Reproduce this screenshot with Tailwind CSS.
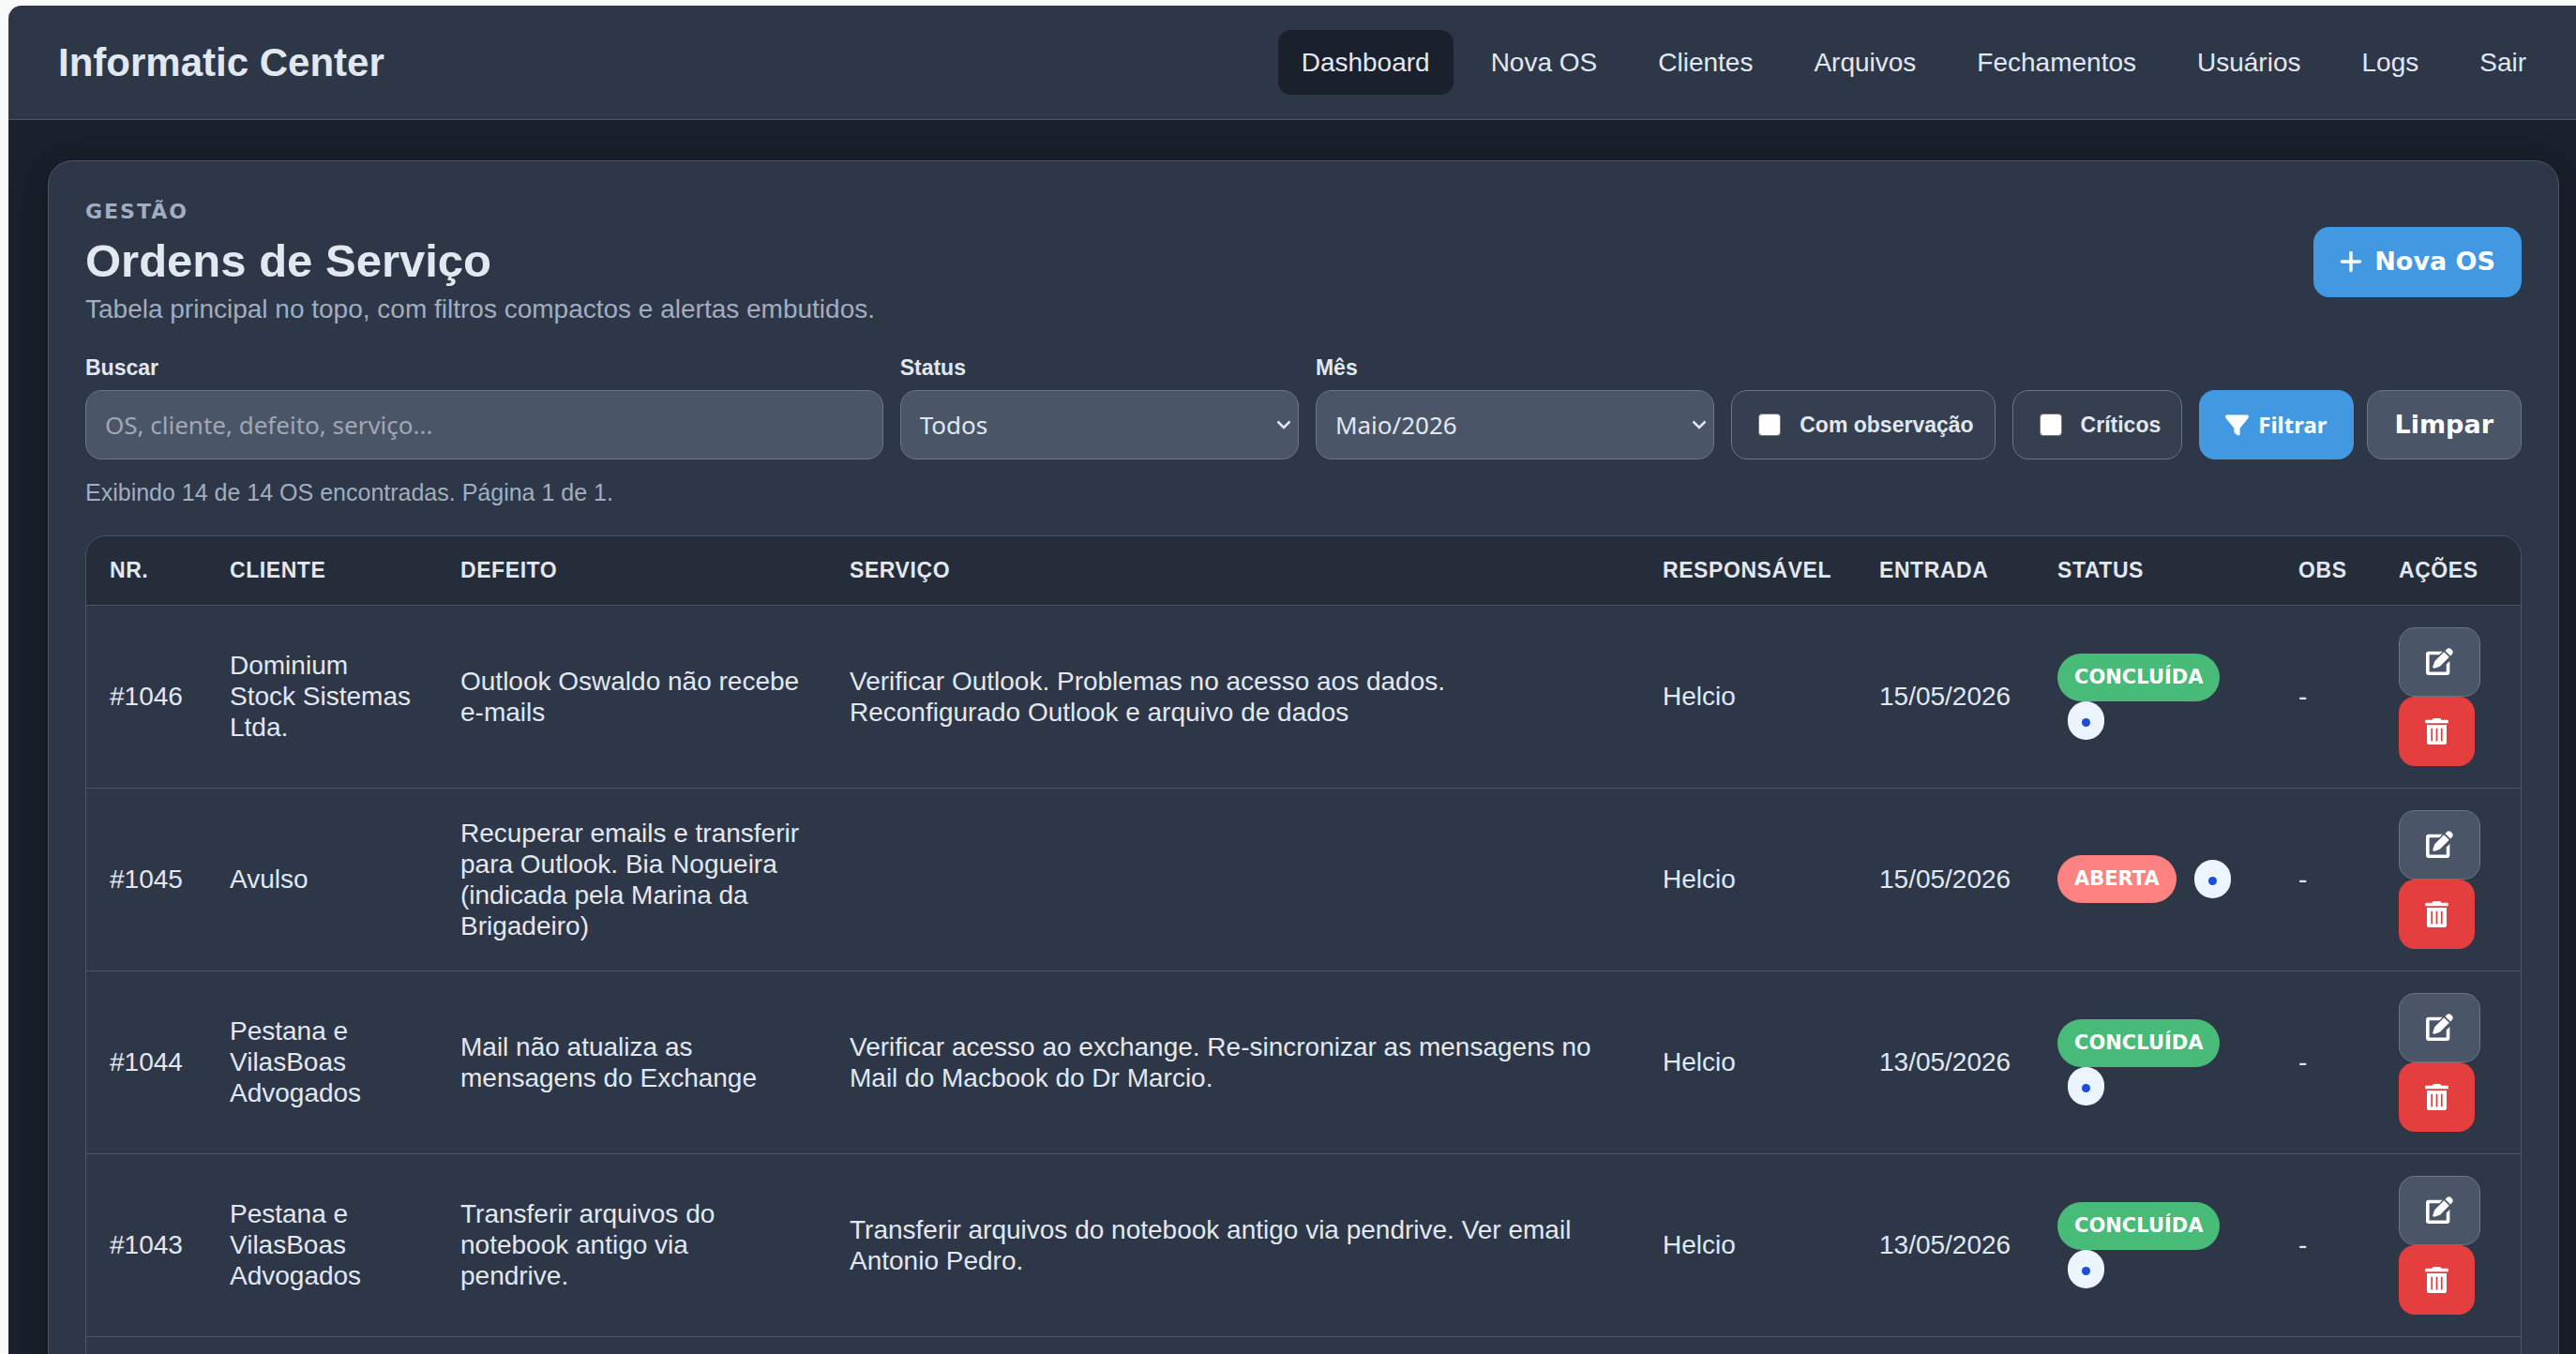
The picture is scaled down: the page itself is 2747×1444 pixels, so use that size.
<!DOCTYPE html>
<html lang="pt-BR">

<head>
    <meta charset="UTF-8">
    <meta name="viewport" content="width=device-width, initial-scale=1.0">
    <title>Informatic Center - Ordens de Serviço</title>
    <script src="https://cdn.jsdelivr.net/npm/@tailwindcss/browser@4"></script>
</head>

<body class="bg-[#f8f9fb] font-['Liberation_Sans',Arial,sans-serif] text-[28px] text-[#e2e8f0]">
    <!-- Icons -->
    <svg class="hidden" aria-hidden="true">
        <symbol id="icon-edit" viewBox="0 0 512 512">
            <path d="M471.6 21.7c-21.9-21.9-57.3-21.9-79.2 0L362.3 51.7l97.9 97.9 30.1-30.1c21.9-21.9 21.9-57.3 0-79.2L471.6 21.7zM172.4 241.7c-6.1 6.1-10.8 13.6-13.5 21.9l-29.6 88.8c-2.9 8.6-.6 18.1 5.8 24.6s15.9 8.7 24.6 5.8l88.8-29.6c8.2-2.7 15.7-7.4 21.9-13.5L437.7 172.3 339.7 74.3 172.4 241.7zM384 311V448H64V128H250L314 64H48C21.5 64 0 85.5 0 112V464c0 26.5 21.5 48 48 48H400c26.5 0 48-21.5 48-48V247z" />
        </symbol>
        <symbol id="icon-trash" viewBox="0 0 448 512">
            <path d="M32 464a48 48 0 0 0 48 48h288a48 48 0 0 0 48-48V128H32zm272-256a16 16 0 0 1 32 0v224a16 16 0 0 1-32 0zm-96 0a16 16 0 0 1 32 0v224a16 16 0 0 1-32 0zm-96 0a16 16 0 0 1 32 0v224a16 16 0 0 1-32 0zM432 32H312l-9.4-18.7A24 24 0 0 0 281.1 0H166.8a23.72 23.72 0 0 0-21.4 13.3L136 32H16A16 16 0 0 0 0 48v32a16 16 0 0 0 16 16h416a16 16 0 0 0 16-16V48a16 16 0 0 0-16-16z" />
        </symbol>
        <symbol id="icon-chevron" viewBox="0 0 16 10">
            <path d="M1.5 1.5 8 8l6.500-6.500" fill="none" stroke="currentColor" stroke-width="2.500" />
        </symbol>
    </svg>

    <div class="flex h-screen flex-col overflow-hidden pl-[9px] pt-[6px]">
        <!-- Navigation Bar -->
        <header class="flex items-center justify-between rounded-tl-[14px] border-b border-[#4a5568] bg-[#2d3748] py-[26px] pl-[53px] pr-[28px]">
            <a href="#" class="text-[42px] leading-[48px] font-bold">Informatic Center</a>
            <nav class="flex gap-[15px] leading-[33px]">
                <a href="#" class="rounded-[14px] bg-[#1a202c] px-[25px] py-[18px]">Dashboard</a>
                <a href="#" class="rounded-[14px] px-[25px] py-[18px]">Nova OS</a>
                <a href="#" class="rounded-[14px] px-[25px] py-[18px]">Clientes</a>
                <a href="#" class="rounded-[14px] px-[25px] py-[18px]">Arquivos</a>
                <a href="#" class="rounded-[14px] px-[25px] py-[18px]">Fechamentos</a>
                <a href="#" class="rounded-[14px] px-[25px] py-[18px]">Usuários</a>
                <a href="#" class="rounded-[14px] px-[25px] py-[18px]">Logs</a>
                <a href="#" class="rounded-[14px] px-[25px] py-[18px]">Sair</a>
            </nav>
        </header>

        <main class="flex-1 overflow-hidden bg-[#1a202c] pl-[42px] pr-[18px] pt-[43px]">
            <section class="rounded-[26px] border border-[#4a5568] bg-[#2d3748] px-[39px] py-[40px] shadow-[0_7px_42px_rgba(0,0,0,0.3)]">
                <!-- Title -->
                <div class="flex items-center justify-between">
                    <div>
                        <p class="mb-[10px] font-['DejaVu_Sans',Verdana,sans-serif] text-[22px] leading-[28px] font-black tracking-[2px] text-[#a0aec0]">GESTÃO</p>
                        <h1 class="text-[49px] leading-[56px] font-bold">Ordens de Serviço</h1>
                        <p class="mt-[8px] leading-[32px] text-[#a0aec0]">Tabela principal no topo, com filtros compactos e alertas embutidos.</p>
                    </div>
                    <a href="#" class="flex h-[75px] items-center gap-[13px] rounded-[17px] bg-[#4299e1] px-[28px] font-['DejaVu_Sans',Verdana,sans-serif] text-[27px] font-black text-white">
                        <svg class="h-[28px] w-[24px]" viewBox="0 0 448 512" fill="currentColor" aria-hidden="true">
                            <path d="M256 80c0-17.700-14.300-32-32-32s-32 14.300-32 32V224H48c-17.700 0-32 14.300-32 32s14.300 32 32 32H192V432c0 17.700 14.300 32 32 32s32-14.300 32-32V288H400c17.700 0 32-14.300 32-32s-14.300-32-32-32H256V80z" />
                        </svg>
                        Nova OS
                    </a>
                </div>

                <!-- Filters -->
                <form class="mt-[32px] flex items-end gap-[18px] font-['Noto_Sans','Liberation_Sans',sans-serif] text-[26px]">
                    <div class="flex-2">
                        <label for="busca" class="mb-[10px] block font-['Liberation_Sans',Arial,sans-serif] text-[23px] leading-[28px] font-bold">Buscar</label>
                        <input id="busca" type="text" placeholder="OS, cliente, defeito, serviço..."
                            class="block h-[74px] w-full rounded-[17px] border border-[#6b7585] bg-[#4a5568] px-[20px] placeholder:text-[#a0a8b4]">
                    </div>
                    <div class="flex-1">
                        <label for="status" class="mb-[10px] block font-['Liberation_Sans',Arial,sans-serif] text-[23px] leading-[28px] font-bold">Status</label>
                        <div class="relative">
                            <select id="status" class="block h-[74px] w-full appearance-none rounded-[17px] border border-[#6b7585] bg-[#4a5568] px-[20px]">
                                <option>Todos</option>
                            </select>
                            <svg class="pointer-events-none absolute right-[8px] top-[32px] h-[10px] w-[16px]"><use href="#icon-chevron" /></svg>
                        </div>
                    </div>
                    <div class="flex-1">
                        <label for="mes" class="mb-[10px] block font-['Liberation_Sans',Arial,sans-serif] text-[23px] leading-[28px] font-bold">Mês</label>
                        <div class="relative">
                            <select id="mes" class="block h-[74px] w-full appearance-none rounded-[17px] border border-[#6b7585] bg-[#4a5568] px-[20px]">
                                <option>Maio/2026</option>
                            </select>
                            <svg class="pointer-events-none absolute right-[8px] top-[32px] h-[10px] w-[16px]"><use href="#icon-chevron" /></svg>
                        </div>
                    </div>
                    <label for="com-obs" class="flex h-[74px] items-center gap-[20px] rounded-[17px] border border-[#6b7585] bg-[#363f50] pl-[28px] pr-[22px] font-['Liberation_Sans',Arial,sans-serif] text-[23px] font-bold whitespace-nowrap">
                        <input id="com-obs" type="checkbox" class="size-[24px] appearance-none rounded-[4px] border border-[#767676] bg-white">
                        Com observação
                    </label>
                    <label for="criticos" class="flex h-[74px] items-center gap-[20px] rounded-[17px] border border-[#6b7585] bg-[#363f50] pl-[28px] pr-[22px] font-['Liberation_Sans',Arial,sans-serif] text-[23px] font-bold whitespace-nowrap">
                        <input id="criticos" type="checkbox" class="size-[24px] appearance-none rounded-[4px] border border-[#767676] bg-white">
                        Críticos
                    </label>
                    <div class="flex gap-[14px] text-white">
                        <button type="submit" class="flex h-[74px] items-center gap-[10px] rounded-[17px] bg-[#4299e1] px-[28px] text-[24px] font-bold">
                            <svg class="size-[25px]" viewBox="0 0 512 512" fill="currentColor" aria-hidden="true">
                                <path d="M3.900 54.900C10.500 40.900 24.500 32 40 32H472c15.500 0 29.500 8.900 36.100 22.900s4.600 30.500-5.200 42.500L320 320.900V448c0 12.100-6.800 23.200-17.700 28.600s-23.800 4.300-33.500-3l-64-48c-8.100-6-12.800-15.500-12.800-25.600V320.900L9 97.300C-.7 85.400-2.800 68.800 3.900 54.900z" />
                            </svg>
                            Filtrar
                        </button>
                        <a href="#" class="flex h-[74px] items-center rounded-[17px] border border-[#6b7585] bg-[#4a5568] px-[29px] font-['DejaVu_Sans',Verdana,sans-serif] text-[27px] font-black">Limpar</a>
                    </div>
                </form>

                <p class="mt-[21px] text-[25px] leading-[28px] text-[#a0aec0]">Exibindo 14 de 14 OS encontradas. Página 1 de 1.</p>

                <!-- Orders Table -->
                <div class="mt-[32px] overflow-hidden rounded-[22px] border border-[#4a5568]">
                    <table class="w-full table-fixed text-left leading-[33px]">
                        <colgroup>
                            <col class="w-[128px]">
                            <col class="w-[246px]">
                            <col class="w-[415px]">
                            <col>
                            <col class="w-[231px]">
                            <col class="w-[190px]">
                            <col class="w-[257px]">
                            <col class="w-[107px]">
                            <col class="w-[155px]">
                        </colgroup>
                        <thead class="bg-[#252c3a] text-[23px] tracking-wide">
                            <tr class="h-[73px] border-b border-[#4a5568]">
                                <th class="px-[25px]">NR.</th>
                                <th class="px-[25px]">CLIENTE</th>
                                <th class="px-[25px]">DEFEITO</th>
                                <th class="px-[25px]">SERVIÇO</th>
                                <th class="px-[25px]">RESPONSÁVEL</th>
                                <th class="px-[25px]">ENTRADA</th>
                                <th class="px-[25px]">STATUS</th>
                                <th class="px-[25px]">OBS</th>
                                <th class="px-[25px]">AÇÕES</th>
                            </tr>
                        </thead>
                        <tbody id="orders"></tbody>
                    </table>
                </div>
            </section>
        </main>
    </div>

    <!-- JavaScript -->
    <script>
        const orders = [
            { nr: 1046, cliente: 'Dominium Stock Sistemas Ltda.', defeito: 'Outlook Oswaldo não recebe e-mails', servico: 'Verificar Outlook. Problemas no acesso aos dados.<br>Reconfigurado Outlook e arquivo de dados', entrada: '15/05/2026', status: 'CONCLUÍDA' },
            { nr: 1045, cliente: 'Avulso', defeito: 'Recuperar emails e transferir para Outlook. Bia Nogueira (indicada pela Marina da Brigadeiro)', servico: '', entrada: '15/05/2026', status: 'ABERTA' },
            { nr: 1044, cliente: 'Pestana e VilasBoas Advogados', defeito: 'Mail não atualiza as mensagens do Exchange', servico: 'Verificar acesso ao exchange. Re-sincronizar as mensagens no Mail do Macbook do Dr Marcio.', entrada: '13/05/2026', status: 'CONCLUÍDA' },
            { nr: 1043, cliente: 'Pestana e VilasBoas Advogados', defeito: 'Transferir arquivos do notebook antigo via pendrive.', servico: 'Transferir arquivos do notebook antigo via pendrive. Ver email Antonio Pedro.', entrada: '13/05/2026', status: 'CONCLUÍDA' }
        ];

        const statusColors = {
            'CONCLUÍDA': 'bg-[#48bb78]',
            'ABERTA': 'bg-[#fc8181]'
        };

        const rows = orders.map(order => `
            <tr class="border-b border-[#4a5568]">
                <td class="px-[25px]">#${order.nr}</td>
                <td class="px-[25px]">${order.cliente}</td>
                <td class="px-[25px]">${order.defeito}</td>
                <td class="px-[25px]">${order.servico}</td>
                <td class="px-[25px]">Helcio</td>
                <td class="pl-[25px] whitespace-nowrap">${order.entrada}</td>
                <td class="px-[25px]">
                    <div class="flex flex-wrap items-center gap-x-[8px]">
                        <span class="flex h-[51px] items-center rounded-full px-[18px] font-['DejaVu_Sans',Verdana,sans-serif] text-[21px] font-black text-white ${statusColors[order.status]}">${order.status}</span>
                        <span class="ml-[11px] flex h-[41px] w-[39px] items-center justify-center rounded-full bg-[#ebf4ff] pt-[4px]">
                            <span class="size-[9px] rounded-full bg-[#1d4ed8]"></span>
                        </span>
                    </div>
                </td>
                <td class="px-[25px]">-</td>
                <td class="px-[25px] py-[23px]">
                    <a href="#" aria-label="Editar OS ${order.nr}" class="flex h-[74px] w-[87px] items-center justify-center rounded-[17px] border border-[#6b7585] bg-[#4a5568] text-white">
                        <svg class="size-[29px]" fill="currentColor"><use href="#icon-edit" /></svg>
                    </a>
                    <button type="button" aria-label="Excluir OS ${order.nr}" class="flex h-[74px] w-[81px] items-center justify-center rounded-[17px] bg-[#e53e3e] text-white">
                        <svg class="h-[28px] w-[25px]" fill="currentColor"><use href="#icon-trash" /></svg>
                    </button>
                </td>
            </tr>`);

        // Blank row keeps the table open below the last order
        rows.push('<tr class="h-[195px]"><td colspan="9"></td></tr>');

        document.getElementById('orders').innerHTML = rows.join('');
    </script>
</body>

</html>
